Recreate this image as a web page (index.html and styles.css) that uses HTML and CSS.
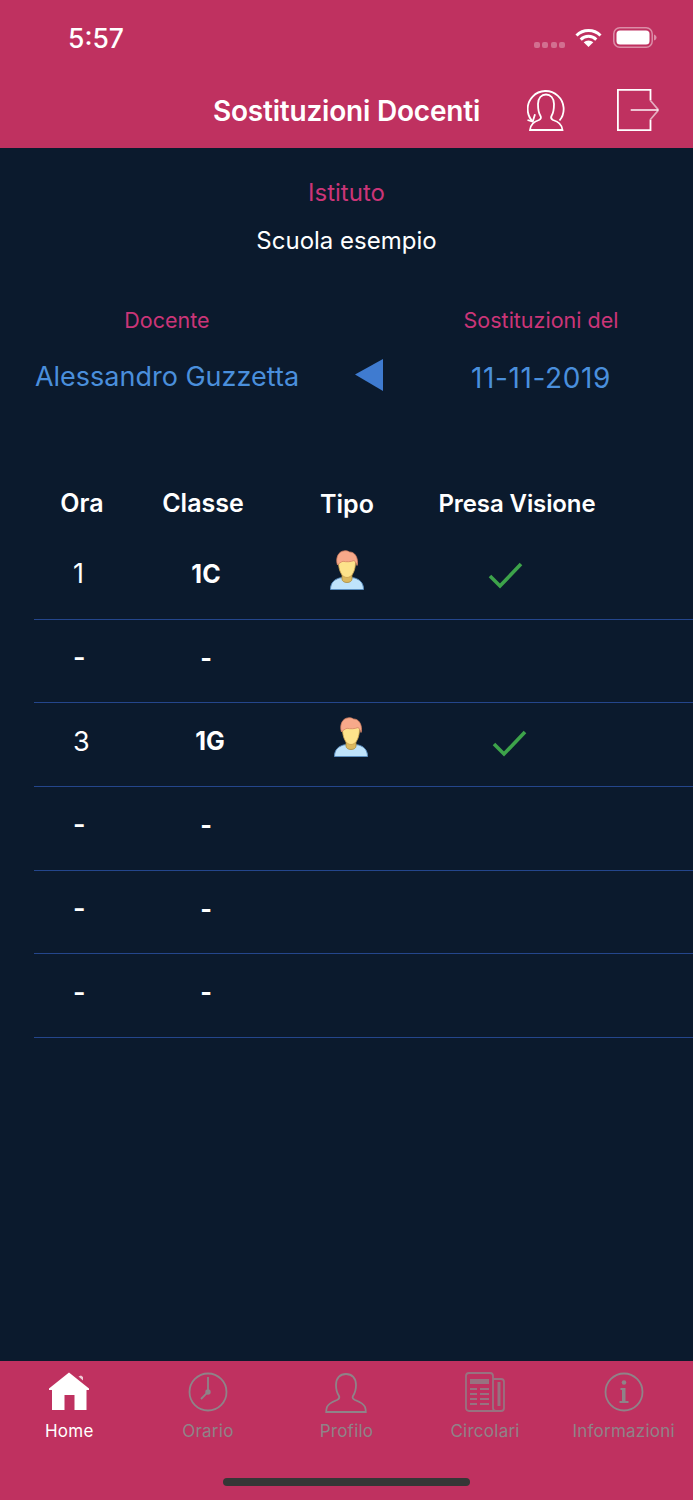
FILE: index.html
```html
<!DOCTYPE html>
<html lang="it">
<head>
<meta charset="utf-8">
<title>Sostituzioni Docenti</title>
<link rel="stylesheet" href="styles.css">
</head>
<body>
<div class="app">
  <header class="top">
    <div class="status">
      <span class="clock">5:57</span>
      <div class="status-icons">
        <span class="dots"><i></i><i></i><i></i><i></i></span>
        <svg class="wifi" width="27" height="19" viewBox="0 0 27 19"><path d="M1.500 7.500a17 17 0 0 1 24 0M5.700 11.600a11 11 0 0 1 15.600 0" fill="none" stroke="#fff" stroke-width="3"/><path d="M13.500 19L8.700 14.300a7 7 0 0 1 9.600 0z" fill="#fff"/></svg>
        <svg class="battery" width="44" height="21" viewBox="0 0 44 21"><rect x=".8" y=".8" width="38.400" height="19.400" rx="6" fill="none" stroke="#fff" stroke-opacity=".45" stroke-width="1.500"/><rect x="3.500" y="3.500" width="33" height="14" rx="3.500" fill="#fff"/><path d="M41 7.500v6c1.500-.5 2.500-1.500 2.500-3S42.500 8 41 7.500z" fill="#fff" fill-opacity=".45"/></svg>
      </div>
    </div>
    <div class="nav">
      <h1 class="title">Sostituzioni Docenti</h1>
      <svg class="nav-user" width="38" height="42" viewBox="0 0 38 42" fill="none" stroke="#fff" stroke-width="1.800"><path d="M32.500 31.500A18 18 0 1 0 5.700 32.500"/><path d="M.5 31l5.200 1.700L8 25.300"/><path d="M13.500 27C11.500 24 11 20 11 15 11 9 14.500 5.500 19 5.500S27 9 27 15c0 5-.5 9-2.500 12-1 2-.5 3 1.500 4 5 1.500 9 4 9.500 10H3c.5-6 4-8.500 9-10 2-1 2.500-2 1.500-4z"/></svg>
      <svg class="nav-exit" width="42" height="42" viewBox="0 0 42 42" fill="none" stroke="#fff" stroke-width="1.800"><path d="M33.500 11V.9H.9v40.200h32.600V31"/><path d="M13.700 21H41" stroke-opacity=".8"/><path d="M33 11l8.500 10L33 31" stroke-opacity=".6"/></svg>
    </div>
  </header>

  <main class="content">
    <section class="school">
      <div class="school-label">Istituto</div>
      <div class="school-name">Scuola esempio</div>
    </section>

    <section class="picker">
      <div class="picker-teacher">
        <div class="picker-label">Docente</div>
        <div class="picker-value">Alessandro Guzzetta</div>
      </div>
      <svg class="picker-arrow" width="30" height="34" viewBox="0 0 30 34"><path d="M1 16.500L29 1v32z" fill="#3f7bd0"/></svg>
      <div class="picker-date">
        <div class="picker-label">Sostituzioni del</div>
        <div class="picker-value picker-day">11-11-2019</div>
      </div>
    </section>

    <section class="table">
      <div class="thead">
        <span>Ora</span>
        <span>Classe</span>
        <span class="thead-tipo">Tipo</span>
        <span class="thead-seen">Presa Visione</span>
      </div>

      <div class="row">
        <span class="ora">1</span>
        <span class="classe">1C</span>
        <span class="tipo"><svg width="36" height="40" viewBox="0 0 36 40"><use href="#person"/></svg></span>
        <span class="seen"><svg width="36" height="28" viewBox="0 0 36 28"><use href="#check"/></svg></span>
      </div>
      <div class="row"><span class="ora dash">-</span><span class="classe">-</span></div>
      <div class="row row-shift">
        <span class="ora">3</span>
        <span class="classe">1G</span>
        <span class="tipo"><svg width="36" height="40" viewBox="0 0 36 40"><use href="#person"/></svg></span>
        <span class="seen"><svg width="36" height="28" viewBox="0 0 36 28"><use href="#check"/></svg></span>
      </div>
      <div class="row"><span class="ora dash">-</span><span class="classe">-</span></div>
      <div class="row"><span class="ora dash">-</span><span class="classe">-</span></div>
      <div class="row"><span class="ora dash">-</span><span class="classe">-</span></div>
    </section>
  </main>

  <nav class="tabs">
    <div class="tab tab-on">
      <svg width="44" height="42" viewBox="0 0 44 42" fill="#fff"><path d="M22 .5L42 16.500V18h-2.500v20H27.500V23H17.500v15H5V18H2v-1.500z"/><path d="M31.500 4.500l2.500-1 2 1.500v3.500z" fill-opacity=".75"/></svg>
      <span>Home</span>
    </div>
    <div class="tab">
      <svg width="40" height="42" viewBox="0 0 40 42" fill="none" stroke="#8f8388" stroke-width="1.800"><circle cx="20" cy="20" r="18.500"/><path d="M20 5v15l-7 7"/><circle cx="20" cy="20" r="1.800" fill="#8f8388"/></svg>
      <span>Orario</span>
    </div>
    <div class="tab">
      <svg width="44" height="42" viewBox="0 0 44 42" fill="none" stroke="#8f8388" stroke-width="1.800"><path d="M15 24c-2-3-3-6-3-11 0-7 4-11 10-11s10 4 10 11c0 5-1 8-3 11-1 2 0 3 2 4 5 2 9 4 10 7 .5 1.500 .8 3 .8 5H2.200c0-2 .3-3.500 .8-5 1-3 5-5 10-7 2-1 3-2 2-4z"/></svg>
      <span>Profilo</span>
    </div>
    <div class="tab">
      <svg width="42" height="42" viewBox="0 0 42 42" fill="none" stroke="#8f8388" stroke-opacity=".8" stroke-width="1.800"><path d="M29 7h8a3 3 0 0 1 3 3v26a3 3 0 0 1-3 3H5a3 3 0 0 1-3-3V4a3 3 0 0 1 3-3h21a3 3 0 0 1 3 3v32a3 3 0 0 0 3 3"/><rect x="33.500" y="10" width="3" height="24" fill="#8f8388" fill-opacity=".8" stroke="none"/><rect x="6" y="7" width="19" height="5" fill="#8f8388" fill-opacity=".8" stroke="none"/><path d="M6 17h7M6 22h7M6 27h7M6 32h7M16 17h9M16 22h9M16 27h9M16 32h9" stroke-width="2"/></svg>
      <span>Circolari</span>
    </div>
    <div class="tab">
      <svg width="40" height="42" viewBox="0 0 40 42" fill="none" stroke="#8f8388" stroke-width="1.800"><circle cx="20" cy="20" r="18.500"/><circle cx="20" cy="10.500" r="2.300" fill="#8f8388" stroke="none"/><path d="M16.500 16h5v13h3v2h-9v-2h2.500V18h-1.500z" fill="#8f8388" stroke="none"/></svg>
      <span>Informazioni</span>
    </div>
    <div class="home-bar"></div>
  </nav>
</div>

<svg class="defs" width="0" height="0">
  <defs>
    <g id="person">
      <path d="M1.500 39.500c0-7 4-10 9-11.500l7.500-1 7.500 1c5 1.500 9 4.500 9 11.500z" fill="#bfe3fb" stroke="#5c8fc0" stroke-width="1"/>
      <path d="M13 24h10v5c0 2-2 3.500-5 3.500s-5-1.500-5-3.500z" fill="#dcb95e" stroke="#a98a3c" stroke-width=".8"/>
      <path d="M9.500 12c0 8 3 15.500 8.500 15.500S26.500 20 26.500 12 23 5 18 5s-8.500 0-8.500 7z" fill="#fde38b" stroke="#c9a04e" stroke-width=".8"/>
      <path d="M8.500 15C6.500 9 8.500 1 16 .8c2 0 3.500 .5 4.500 1.200 5 0 8 4.500 8 10.500 0 1 0 2-.5 3-.5-2-1.500-4-3-5-3 1.500-8 1.500-11 .8-2 .7-4 2-5.500 3.700z" fill="#f7a98a" stroke="#d68465" stroke-width=".8"/>
    </g>
    <g id="check">
      <path d="M2 15l10 10L33 3" fill="none" stroke="#3da34a" stroke-width="3.600"/>
    </g>
  </defs>
</svg>
</body>
</html>
```

FILE: styles.css
```css
html, body {
  margin: 0;
  padding: 0;
  height: 100%;
  background: #0b1a2d;
}

body {
  font-family: Inter, "Liberation Sans", sans-serif;
  color: #fff;
  overflow: hidden;
}

.app {
  display: flex;
  flex-direction: column;
  height: 1500px;
}

/* header */
.top {
  background: #bf3160;
  height: 148px;
  flex: none;
}

.status {
  display: flex;
  justify-content: space-between;
  align-items: center;
  height: 76px;
  padding: 0 36px 0 68px;
}

.clock {
  font-size: 26.500px;
  font-weight: 500;
}

.status-icons {
  display: flex;
  align-items: center;
  margin-top: -1px;
}

.dots {
  display: flex;
  gap: 2.300px;
  margin: 15px 10px 0 0;
}

.dots i {
  width: 6px;
  height: 6px;
  border-radius: 2px;
  background: rgba(255, 255, 255, .3);
}

.battery {
  margin-left: 11px;
}

.nav {
  position: relative;
  display: flex;
  justify-content: center;
  align-items: center;
  height: 68px;
}

.title {
  margin: 0;
  padding-top: 1px;
  font-size: 28px;
  font-weight: 600;
  letter-spacing: -.2px;
}

.nav-user {
  position: absolute;
  left: 527px;
  top: 13px;
}

.nav-exit {
  position: absolute;
  left: 617px;
  top: 13px;
}

/* content */
.content {
  flex: 1;
  min-height: 0;
}

.school {
  text-align: center;
  padding-top: 30px;
}

.school-label {
  color: #cb3578;
  font-size: 24px;
  line-height: 30px;
}

.school-name {
  font-size: 24px;
  line-height: 30px;
  margin-top: 18px;
}

.picker {
  display: grid;
  grid-template-columns: 320px 70px 1fr;
  align-items: center;
  margin-top: 50px;
  padding-left: 7px;
}

.picker-teacher, .picker-date {
  text-align: center;
}

.picker-date {
  width: 230px;
  margin-left: 29px;
}

.picker-label {
  color: #cb3578;
  font-size: 21.500px;
  line-height: 28px;
}

.picker-value {
  color: #4a8fdc;
  font-size: 27px;
  line-height: 34px;
  margin-top: 26px;
}

.picker-day {
  font-size: 28px;
  letter-spacing: .6px;
  padding-top: 1px;
  margin-bottom: -1px;
}

.picker-arrow {
  margin: 50px 0 0 27px;
}

/* table */
.thead {
  display: grid;
  grid-template-columns: 96px 146px 142px 198px;
  margin: 91px 0 15px 34px;
  height: 36px;
  align-items: center;
  text-align: center;
  font-size: 25px;
  font-weight: 600;
}

.thead-tipo {
  padding-top: 2px;
}

.thead-seen {
  font-size: 24px;
  letter-spacing: -.1px;
}

.row {
  display: grid;
  grid-template-columns: 90px 164px 118px 200px;
  align-items: center;
  height: 83.700px;
  margin-left: 34px;
  padding-bottom: 7px;
  box-sizing: border-box;
  border-bottom: 1px solid #24468c;
  text-align: center;
  font-size: 27px;
}

.ora {
  text-align: left;
  padding-left: 39px;
  font-size: 27px;
}

.ora.dash {
  font-weight: 600;
}

.classe {
  font-size: 25px;
  font-weight: 700;
}

.tipo svg {
  display: block;
  margin: -8px auto 0;
}

.seen svg {
  display: block;
  margin: 3px auto 0;
}

.row-shift .classe,
.row-shift .tipo,
.row-shift .seen {
  margin-left: 8px;
}

.defs {
  position: absolute;
}

/* tab bar */
.tabs {
  position: relative;
  flex: none;
  height: 139px;
  background: #bf3160;
  display: grid;
  grid-template-columns: repeat(5, 1fr);
}

.tab {
  display: flex;
  flex-direction: column;
  align-items: center;
  padding-top: 11px;
  color: #8f8388;
  font-size: 17px;
  font-weight: 400;
  letter-spacing: .25px;
}

.tab svg {
  display: block;
}

.tab span {
  margin-top: 6px;
  line-height: 22px;
  white-space: nowrap;
}

.tab-on {
  color: #fff;
}

.home-bar {
  position: absolute;
  left: 223px;
  bottom: 14px;
  width: 247px;
  height: 8px;
  border-radius: 4px;
  background: #363636;
}
```
